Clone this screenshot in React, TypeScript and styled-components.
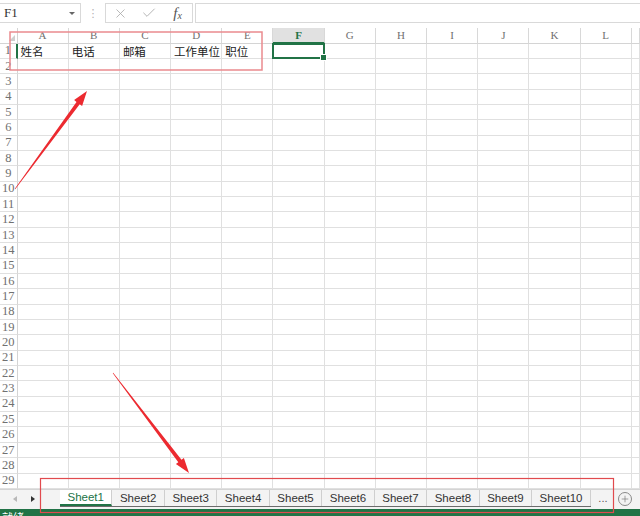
import styled, { createGlobalStyle } from "styled-components";
import { X, Check, Plus } from "lucide-react";

const GlobalStyle = createGlobalStyle`
  html, body {
    margin: 0;
    padding: 0;
    background: #ffffff;
  }
  * {
    box-sizing: border-box;
  }
`;

const COLS = ["A", "B", "C", "D", "E", "F", "G", "H", "I", "J", "K", "L"];
const ROWS = 29;
const SELECTED_COL = "F";
const SELECTED_ROW = 1;

const header: Record<string, string> = {
  A: "姓名",
  B: "电话",
  C: "邮箱",
  D: "工作单位",
  E: "职位",
};

const sheets = Array.from({ length: 10 }, (_, i) => `Sheet${i + 1}`);

// tapered arrow like the ones drawn on screenshots
const arrowPoints = (x1: number, y1: number, x2: number, y2: number) => {
  const len = Math.hypot(x2 - x1, y2 - y1);
  const dx = (x2 - x1) / len;
  const dy = (y2 - y1) / len;
  const nx = -dy;
  const ny = dx;
  const headLen = 15;
  const bx = x2 - dx * headLen;
  const by = y2 - dy * headLen;
  const pts = [
    [x1 + nx * 0.3, y1 + ny * 0.3],
    [bx + nx * 2, by + ny * 2],
    [bx + nx * 5, by + ny * 5],
    [x2, y2],
    [bx - nx * 5, by - ny * 5],
    [bx - nx * 2, by - ny * 2],
    [x1 - nx * 0.3, y1 - ny * 0.3],
  ];
  return pts.map((p) => p.map((v) => v.toFixed(1)).join(",")).join(" ");
};

const App = () => {
  return (
    <Page>
      <GlobalStyle />
      <FormulaBar>
        <NameBox>
          <span>F1</span>
          <Caret />
        </NameBox>
        <Dots>⋮</Dots>
        <FxBox>
          <FxSlot>
            <X size={15} strokeWidth={1.3} color="#a9a9a9" />
          </FxSlot>
          <FxSlot>
            <Check size={16} strokeWidth={1.3} color="#a9a9a9" />
          </FxSlot>
          <FxSlot>
            <Fx>
              f<sub>x</sub>
            </Fx>
          </FxSlot>
        </FxBox>
        <FormulaInput />
      </FormulaBar>

      <Sheet>
        <Corner>
          <CornerMark />
        </Corner>
        {COLS.map((c) => (
          <ColHead key={c} $selected={c === SELECTED_COL}>
            {c}
          </ColHead>
        ))}
        <ColHead />
        {Array.from({ length: ROWS }, (_, r) => {
          const row = r + 1;
          return [
            <RowHead key={`h${row}`} $selected={row === SELECTED_ROW}>
              {row}
            </RowHead>,
            ...COLS.map((c) => (
              <Cell
                key={`${c}${row}`}
                $selected={row === SELECTED_ROW && c === SELECTED_COL}
              >
                {row === 1 ? header[c] : ""}
              </Cell>
            )),
            <Cell key={`rest${row}`} />,
          ];
        })}
      </Sheet>

      <TabBar>
        <Nav>
          <NavArrow $dir="left" $color="#b8b8b8" />
          <NavArrow $dir="right" $color="#333333" />
        </Nav>
        <Tabs>
          {sheets.map((s, i) => (
            <Tab key={s} $active={i === 0}>
              {s}
            </Tab>
          ))}
        </Tabs>
        <More>...</More>
        <AddSheet>
          <Plus size={10} strokeWidth={1.6} color="#777" />
        </AddSheet>
      </TabBar>

      <StatusBar>就绪</StatusBar>

      <Overlay width="640" height="516" viewBox="0 0 640 516">
        <rect
          x="10"
          y="32"
          width="252"
          height="38"
          fill="none"
          stroke="#ea8a8e"
          strokeWidth="1.5"
        />
        <rect
          x="40.5"
          y="478.5"
          width="573"
          height="34"
          fill="none"
          stroke="#e14a4e"
          strokeWidth="1.2"
        />
        <polygon points={arrowPoints(15, 189, 87, 91)} fill="#ec2a30" />
        <polygon points={arrowPoints(113, 373, 189, 473)} fill="#ec2a30" />
      </Overlay>
    </Page>
  );
};

export default App;

const Page = styled.div`
  position: relative;
  width: 640px;
  height: 516px;
  overflow: hidden;
  display: flex;
  flex-direction: column;
  background: #ffffff;
`;

const FormulaBar = styled.div`
  height: 28px;
  flex-shrink: 0;
  display: flex;
  align-items: flex-start;
  padding-top: 3px;
`;

const NameBox = styled.div`
  width: 81px;
  height: 20px;
  border: 1px solid #d9d9d9;
  border-left: none;
  display: flex;
  align-items: center;
  justify-content: space-between;
  padding: 0 5px 0 4px;
  font-family: "Liberation Serif", serif;
  font-size: 13px;
  color: #333;
`;

const Caret = styled.span`
  width: 0;
  height: 0;
  border-left: 3px solid transparent;
  border-right: 3px solid transparent;
  border-top: 3px solid #666;
`;

const Dots = styled.div`
  width: 24px;
  height: 20px;
  display: flex;
  align-items: center;
  justify-content: center;
  font-family: "DejaVu Sans", sans-serif;
  font-size: 11px;
  color: #b0b0b0;
`;

const FxBox = styled.div`
  width: 88px;
  height: 20px;
  border: 1px solid #d9d9d9;
  display: flex;
  align-items: center;
`;

const FxSlot = styled.div`
  width: 29px;
  height: 100%;
  display: flex;
  align-items: center;
  justify-content: center;
`;

const Fx = styled.span`
  font-family: "Liberation Serif", serif;
  font-style: italic;
  font-size: 15px;
  color: #555;
  line-height: 1;

  sub {
    font-size: 10px;
    vertical-align: -1px;
  }
`;

const FormulaInput = styled.div`
  flex: 1;
  height: 20px;
  margin-left: 2px;
  border: 1px solid #d9d9d9;
  border-right: none;
`;

const Sheet = styled.div`
  height: 461px;
  flex-shrink: 0;
  display: grid;
  grid-template-columns: 17.5px repeat(12, 51.2px) 1fr;
  grid-template-rows: 15.5px repeat(29, 15.36px);
  overflow: hidden;
`;

const Corner = styled.div`
  position: relative;
  border-right: 1px solid #d4d4d4;
  border-bottom: 1px solid #d4d4d4;
`;

const CornerMark = styled.span`
  position: absolute;
  right: 2px;
  bottom: 2px;
  width: 0;
  height: 0;
  border-left: 6px solid transparent;
  border-bottom: 6px solid #cfcfcf;
`;

const ColHead = styled.div<{ $selected?: boolean }>`
  display: flex;
  align-items: center;
  justify-content: center;
  font-family: "Liberation Serif", serif;
  font-size: 11px;
  font-weight: ${(p) => (p.$selected ? 700 : 400)};
  color: ${(p) => (p.$selected ? "#217346" : "#707070")};
  background: ${(p) => (p.$selected ? "#e1e1e1" : "#ffffff")};
  border-right: 1px solid #d8d8d8;
  border-bottom: ${(p) =>
    p.$selected ? "2px solid #217346" : "1px solid #d4d4d4"};
`;

const RowHead = styled.div<{ $selected?: boolean }>`
  display: flex;
  align-items: center;
  justify-content: center;
  font-family: "Liberation Serif", serif;
  font-size: 12.5px;
  color: #707070;
  border-right: ${(p) =>
    p.$selected ? "2px solid #217346" : "1px solid #d4d4d4"};
  border-bottom: 1px solid #e0e0e0;
`;

const Cell = styled.div<{ $selected?: boolean }>`
  position: relative;
  display: flex;
  align-items: center;
  padding-left: 3px;
  white-space: nowrap;
  font-family: "Noto Sans CJK SC", sans-serif;
  font-size: 11.5px;
  color: #222;
  border-right: 1px solid #e0e0e0;
  border-bottom: 1px solid #e0e0e0;
  z-index: ${(p) => (p.$selected ? 2 : 0)};

  ${(p) =>
    p.$selected &&
    `
    &::after {
      content: "";
      position: absolute;
      left: -1px;
      top: -1px;
      right: -1px;
      bottom: -1px;
      border: 2px solid #217346;
    }
    &::before {
      content: "";
      position: absolute;
      right: -3px;
      bottom: -3px;
      width: 5px;
      height: 5px;
      background: #217346;
      border: 1px solid #ffffff;
      z-index: 3;
    }
  `}
`;

const TabBar = styled.div`
  height: 20px;
  flex-shrink: 0;
  display: flex;
  align-items: flex-start;
  background: #f3f3f3;
  border-top: 1px solid #d4d4d4;
`;

const Nav = styled.div`
  width: 60px;
  flex-shrink: 0;
  height: 17px;
  display: flex;
  align-items: center;
  padding-left: 13px;
  gap: 14px;
`;

const NavArrow = styled.span<{ $dir: "left" | "right"; $color: string }>`
  width: 0;
  height: 0;
  border-top: 3.5px solid transparent;
  border-bottom: 3.5px solid transparent;
  ${(p) =>
    p.$dir === "left"
      ? `border-right: 4px solid ${p.$color};`
      : `border-left: 4px solid ${p.$color};`}
`;

const Tabs = styled.div`
  display: flex;
  flex-shrink: 0;
  border-bottom: 1px solid #6b6b6b;
`;

const Tab = styled.div<{ $active?: boolean }>`
  height: 16px;
  padding: 0 7.5px;
  display: flex;
  align-items: center;
  font-family: "Liberation Sans", Arial, sans-serif;
  font-size: 11.5px;
  color: ${(p) => (p.$active ? "#217346" : "#333")};
  background: ${(p) => (p.$active ? "#ffffff" : "#f3f3f3")};
  border-right: 1px solid #cfcfcf;
  border-bottom: ${(p) => (p.$active ? "2px solid #217346" : "none")};
  margin-bottom: ${(p) => (p.$active ? "-1px" : "0")};
`;

const More = styled.div`
  width: 24px;
  flex-shrink: 0;
  height: 16px;
  display: flex;
  align-items: center;
  justify-content: center;
  font-family: "Liberation Sans", Arial, sans-serif;
  font-size: 11px;
  color: #555;
`;

const AddSheet = styled.div`
  width: 14px;
  height: 14px;
  flex-shrink: 0;
  margin: 2px 0 0 3px;
  border: 1px solid #8a8a8a;
  border-radius: 50%;
  display: flex;
  align-items: center;
  justify-content: center;
`;

const StatusBar = styled.div`
  height: 22px;
  flex-shrink: 0;
  background: #217346;
  color: #ffffff;
  font-family: "Noto Sans CJK SC", sans-serif;
  font-size: 11px;
  padding: 1px 0 0 2px;
  line-height: 14px;
`;

const Overlay = styled.svg`
  position: absolute;
  left: 0;
  top: 0;
  pointer-events: none;
`;
